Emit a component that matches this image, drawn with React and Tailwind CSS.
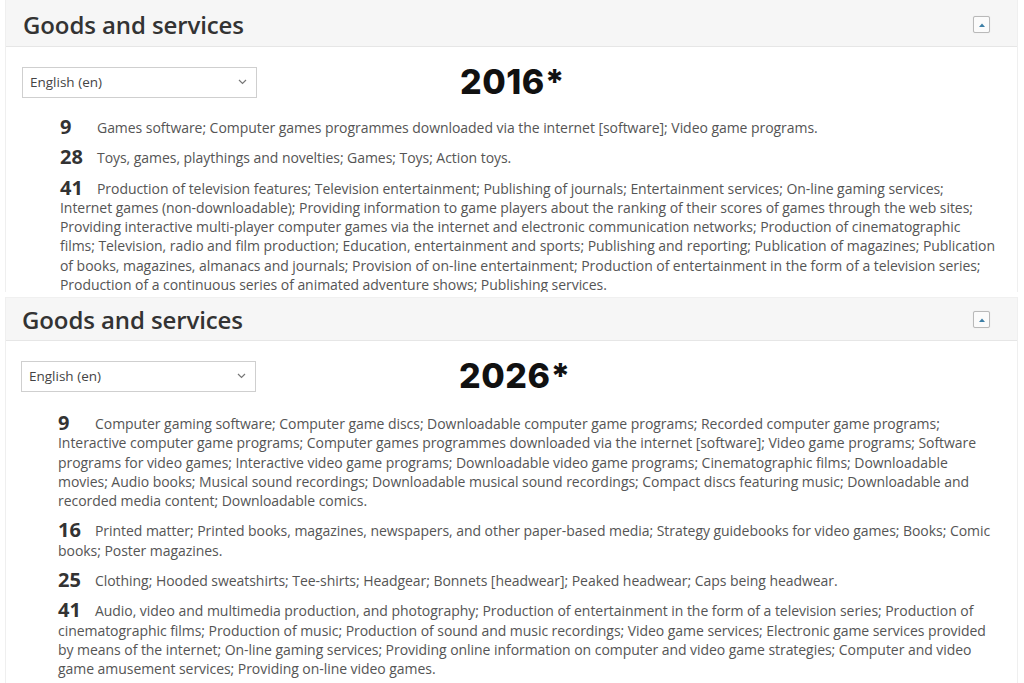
import React from "react";

const font = { fontFamily: '"Open Sans", "Noto Sans", sans-serif' };

function CollapseButton() {
  return (
    <div className="w-[17px] h-[17px] border border-[#b9b9b9] rounded-[2px] bg-[#fbfbfb] flex items-center justify-center shadow-[0_0_1px_rgba(0,0,0,0.15)]">
      <svg width="6" height="4" viewBox="0 0 6 4">
        <path d="M0 4 L3 0.5 L6 4 Z" fill="#3d7fa6" />
      </svg>
    </div>
  );
}

function Select() {
  return (
    <div className="w-[235px] h-[31px] border border-[#cfcfcf] bg-white flex items-center justify-between pl-[7px] pr-[9px] text-[13.5px] text-[#444]">
      <span>English (en)</span>
      <svg width="9" height="6" viewBox="0 0 9 6">
        <path d="M1 1 L4.5 4.5 L8 1" stroke="#777" strokeWidth="1.2" fill="none" />
      </svg>
    </div>
  );
}

function Item({ num, text }) {
  return (
    <p className="text-[14px] leading-[19.3px] tracking-[-0.05px] text-[#555] mb-[11px]">
      <span className="inline-block w-[37px] text-[20px] font-bold text-[#333] leading-[16px] align-[-1px] tracking-normal">
        {num}
      </span>
      {text}
    </p>
  );
}

function Panel({ year, items, outerClass, headerClass, bodyTop, listClass, rowClass }) {
  return (
    <div className={outerClass} style={font}>
      <div className="ml-[5px] mr-[6px] border-l border-r border-[#efefef] h-full">
        <div className={headerClass}>
          <h2 className="text-[24px] font-semibold text-[#333] tracking-[-0.1px]">
            Goods and services
          </h2>
          <div className="mr-[27px]">
            <CollapseButton />
          </div>
        </div>
        <div className={bodyTop}>
          <div className={"flex items-center " + rowClass}>
            <Select />
            <div
              className="ml-[203px] text-[34px] font-extrabold text-[#111] leading-none tracking-[0.5px]"
              style={{ fontFamily: 'Inter, "Liberation Sans", sans-serif' }}
            >
              {year}
            </div>
          </div>
          <div className={listClass}>
            {items.map((it) => (
              <Item key={it.num} num={it.num} text={it.text} />
            ))}
          </div>
        </div>
      </div>
    </div>
  );
}

const items2016 = [
  {
    num: "9",
    text: "Games software; Computer games programmes downloaded via the internet [software]; Video game programs.",
  },
  { num: "28", text: "Toys, games, playthings and novelties; Games; Toys; Action toys." },
  {
    num: "41",
    text: (
      <>
        Production of television features; Television entertainment; Publishing of journals; Entertainment services; On-line gaming services; Internet games (non-downloadable); Providing information to game players about the ranking of their scores of games through the web sites; Providing interactive multi-player computer games via the internet and electronic communication networks; Production of cinematographic
        <br />
        films; Television, radio and film production; Education, entertainment and sports; Publishing and reporting; Publication of magazines; Publication of books, magazines, almanacs and journals; Provision of on-line entertainment; Production of entertainment in the form of a television series; Production of a continuous series of animated adventure shows; Publishing services.
      </>
    ),
  },
];

const items2026 = [
  {
    num: "9",
    text: "Computer gaming software; Computer game discs; Downloadable computer game programs; Recorded computer game programs; Interactive computer game programs; Computer games programmes downloaded via the internet [software]; Video game programs; Software programs for video games; Interactive video game programs; Downloadable video game programs; Cinematographic films; Downloadable movies; Audio books; Musical sound recordings; Downloadable musical sound recordings; Compact discs featuring music; Downloadable and recorded media content; Downloadable comics.",
  },
  {
    num: "16",
    text: "Printed matter; Printed books, magazines, newspapers, and other paper-based media; Strategy guidebooks for video games; Books; Comic books; Poster magazines.",
  },
  {
    num: "25",
    text: "Clothing; Hooded sweatshirts; Tee-shirts; Headgear; Bonnets [headwear]; Peaked headwear; Caps being headwear.",
  },
  {
    num: "41",
    text: "Audio, video and multimedia production, and photography; Production of entertainment in the form of a television series; Production of cinematographic films; Production of music; Production of sound and music recordings; Video game services; Electronic game services provided by means of the internet; On-line gaming services; Providing online information on computer and video game strategies; Computer and video game amusement services; Providing on-line video games.",
  },
];

export default function App() {
  return (
    <div className="w-[1024px] h-[683px] overflow-hidden bg-white">
      <Panel
        year="2016*"
        items={items2016}
        outerClass="h-[292px] overflow-hidden"
        headerClass="h-[47px] pt-[3px] bg-[#f6f6f6] border-b border-[#e6e6e6] flex items-center justify-between pl-[17px]"
        bodyTop="pt-[18px]"
        rowClass="pl-[16px]"
        listClass="pl-[54px] pr-[18px] pt-[19px]"
      />
      <div className="pt-[5px] h-[391px] overflow-hidden">
        <Panel
          year="2026*"
          items={items2026}
          outerClass="h-full"
          headerClass="h-[44px] pt-[1px] bg-[#f6f6f6] border-b border-[#e6e6e6] border-t border-t-[#f0f0f0] flex items-center justify-between pl-[16px]"
          bodyTop="pt-[18px]"
          rowClass="pl-[15px]"
          listClass="pl-[52px] pr-[20px] pt-[21px]"
        />
      </div>
    </div>
  );
}
